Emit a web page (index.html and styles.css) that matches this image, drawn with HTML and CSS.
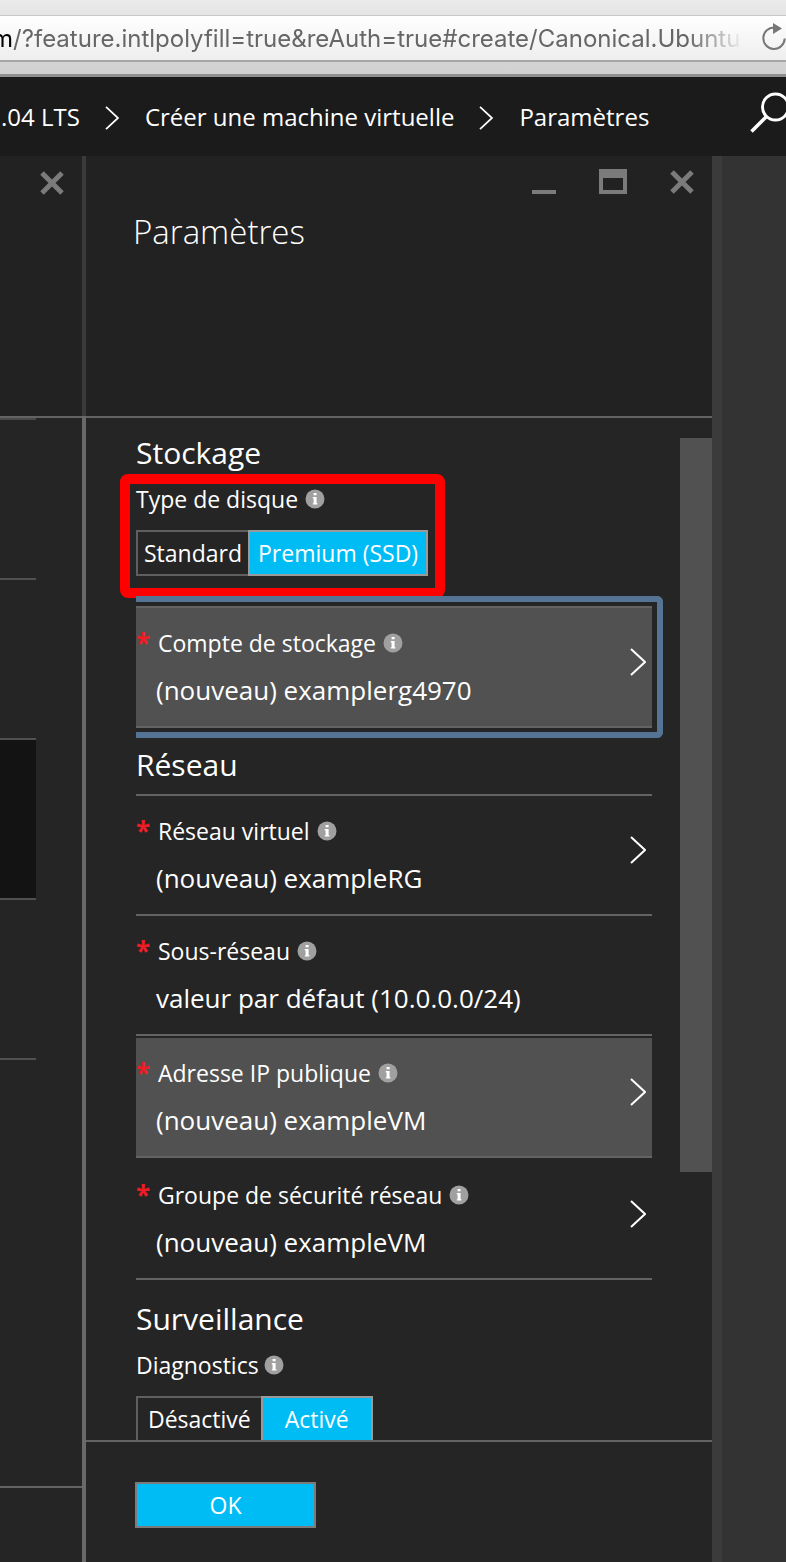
FILE: index.html
```html
<!DOCTYPE html>
<html lang="fr">
<head>
<meta charset="utf-8">
<title>Paramètres</title>
<link rel="stylesheet" href="styles.css">
</head>
<body>
<svg class="sprite" aria-hidden="true">
  <symbol id="info" viewBox="0 0 20 20"><circle cx="10" cy="10" r="9.5" fill="#a0a0a0"/><path d="M8.600 4h3v2.200h-3zM7.800 8h3.800v6.200h.8v1.400H7.800v-1.400h.8V9.400h-.8z" fill="#fff"/></symbol>
  <symbol id="chevron" viewBox="0 0 16 28"><path d="M1 1l14 13L1 27" fill="none" stroke="#fff" stroke-width="2"/></symbol>
  <symbol id="close" viewBox="0 0 24 24"><path d="M2 2l20 20M22 2L2 22" fill="none" stroke="#7b7b7b" stroke-width="5"/></symbol>
</svg>
<div class="page">
  <header class="browser">
    <div class="address">
      <div class="url">
        <span class="url-host">m</span>
        <input class="url-input" type="text" aria-label="Adresse" value="/?feature.intlpolyfill=true&amp;reAuth=true#create/Canonical.Ubuntu">
      </div>
      <button class="reload" type="button" aria-label="Actualiser">
        <svg width="26" height="28" viewBox="0 0 26 28"><path d="M12.5 4.5A10.7 10.700 0 1 0 22.700 15.500" fill="none" stroke="#777" stroke-width="2"/><path d="M11 0l9 5.500L11 11z" fill="#777"/></svg>
      </button>
    </div>
  </header>
  <nav class="crumbs">
    <a class="crumb" href="#">.04 LTS</a>
    <svg class="crumb-arrow" width="14" height="24"><use href="#chevron"/></svg>
    <a class="crumb" href="#">Créer une machine virtuelle</a>
    <svg class="crumb-arrow" width="14" height="24"><use href="#chevron"/></svg>
    <a class="crumb" href="#">Paramètres</a>
    <button class="search" type="button" aria-label="Rechercher">
      <svg width="40" height="42" viewBox="0 0 40 42"><circle cx="25.500" cy="15" r="13" fill="none" stroke="#fff" stroke-width="3"/><path d="M16 25L1.500 39.500" stroke="#fff" stroke-width="3.500"/></svg>
    </button>
  </nav>
  <main class="blades">
    <section class="blade previous">
      <div class="blade-head">
        <button class="tool" type="button" aria-label="Fermer"><svg width="24" height="24"><use href="#close"/></svg></button>
      </div>
      <div class="steps">
        <div class="step"></div>
        <div class="step"></div>
        <div class="step current"></div>
        <div class="step"></div>
      </div>
      <div class="blade-foot"></div>
    </section>
    <div class="divider"></div>
    <section class="blade settings">
      <div class="blade-head">
        <div class="tools">
          <button class="tool" type="button" aria-label="Réduire"><svg width="24" height="26"><path d="M0 21h24v4H0z" fill="#7b7b7b"/></svg></button>
          <button class="tool" type="button" aria-label="Agrandir"><svg width="28" height="26"><path d="M0 0h28v25H0zM4 9v12h20V9z" fill="#7b7b7b" fill-rule="evenodd"/></svg></button>
          <button class="tool" type="button" aria-label="Fermer"><svg width="24" height="24"><use href="#close"/></svg></button>
        </div>
        <h1 class="title">Paramètres</h1>
      </div>
      <div class="blade-body">
        <form class="form" id="settings">
          <h2 class="heading">Stockage</h2>
          <div class="field disk" role="radiogroup" aria-labelledby="disk-label">
            <div class="label" id="disk-label">Type de disque <svg class="info"><use href="#info"/></svg></div>
            <div class="toggle">
              <label class="option snug"><input type="radio" name="disk">Standard</label>
              <label class="option on"><input type="radio" name="disk" checked>Premium (SSD)</label>
            </div>
            <div class="highlight"></div>
          </div>
          <div class="focus">
            <button class="row card" type="button">
              <span class="row-text"><span class="label required">Compte de stockage <svg class="info"><use href="#info"/></svg></span><span class="value">(nouveau) examplerg4970</span></span>
              <svg class="row-arrow"><use href="#chevron"/></svg>
            </button>
          </div>
          <h2 class="heading network">Réseau</h2>
          <div class="rows">
            <button class="row" type="button">
              <span class="row-text"><span class="label required">Réseau virtuel <svg class="info"><use href="#info"/></svg></span><span class="value">(nouveau) exampleRG</span></span>
              <svg class="row-arrow"><use href="#chevron"/></svg>
            </button>
            <div class="row">
              <span class="row-text"><span class="label required">Sous-réseau <svg class="info"><use href="#info"/></svg></span><span class="value">valeur par défaut (10.0.0.0/24)</span></span>
            </div>
            <button class="row spaced filled" type="button">
              <span class="row-text"><span class="label required">Adresse IP publique <svg class="info"><use href="#info"/></svg></span><span class="value">(nouveau) exampleVM</span></span>
              <svg class="row-arrow"><use href="#chevron"/></svg>
            </button>
            <button class="row spaced" type="button">
              <span class="row-text"><span class="label required">Groupe de sécurité réseau <svg class="info"><use href="#info"/></svg></span><span class="value">(nouveau) exampleVM</span></span>
              <svg class="row-arrow"><use href="#chevron"/></svg>
            </button>
          </div>
          <h2 class="heading monitoring">Surveillance</h2>
          <div class="field" role="radiogroup" aria-labelledby="diag-label">
            <div class="label tight" id="diag-label">Diagnostics <svg class="info"><use href="#info"/></svg></div>
            <div class="toggle">
              <label class="option roomy"><input type="radio" name="diag">Désactivé</label>
              <label class="option on wide"><input type="radio" name="diag" checked>Activé</label>
            </div>
          </div>
        </form>
        <div class="scrollbar"></div>
      </div>
      <div class="blade-foot">
        <button class="ok" type="submit" form="settings">OK</button>
      </div>
    </section>
    <div class="edge"></div>
  </main>
</div>
</body>
</html>
```

FILE: styles.css
```css
* { box-sizing: border-box; }

body {
  margin: 0;
  background: #333;
  color: #fff;
  font-family: "Open Sans", "Noto Sans", sans-serif;
  font-size: 23px;
}

button {
  margin: 0;
  padding: 0;
  border: 0;
  background: none;
  color: inherit;
  font: inherit;
  text-align: left;
}

svg { display: block; flex: none; }
.sprite { position: absolute; width: 0; height: 0; }

.page {
  display: flex;
  flex-direction: column;
  height: 100vh;
  overflow: hidden;
}

.browser {
  flex: none;
  padding: 15px 0 12px;
  background: linear-gradient(#ebebeb, #e4e4e4 20%, #d0d0d0);
  border-bottom: 3px solid #8e908f;
}

.address {
  display: flex;
  align-items: center;
  height: 47px;
  border-top: 1px solid #c8c8c8;
  border-bottom: 2px solid #a6a6a6;
  background: linear-gradient(#fff, #eee);
  overflow: hidden;
}

.url {
  display: flex;
  flex: 1;
  min-width: 0;
  margin-left: -8px;
  padding-top: 2px;
  color: #666;
  font: 24px/32px Inter, sans-serif;
  -webkit-mask-image: linear-gradient(to left, transparent, #000 56px);
  mask-image: linear-gradient(to left, transparent, #000 56px);
}

.url-host { color: #000; }

.url-input {
  flex: 1;
  min-width: 0;
  padding: 0;
  border: 0;
  background: none;
  color: inherit;
  font: inherit;
}

.reload { flex: none; width: 24px; margin-left: 18px; padding-bottom: 2px; }

.crumbs {
  display: flex;
  flex: none;
  align-items: center;
  height: 79px;
  padding-left: 1px;
  background: #1b1b1b;
  font-size: 24px;
  overflow: hidden;
}

.crumb { color: inherit; text-decoration: none; white-space: nowrap; }
.crumb-arrow { margin: 3px 26px 0 25px; }
.search { width: 36px; margin-left: auto; padding-bottom: 8px; }

.blades { display: flex; flex: 1; min-height: 0; }

.blade {
  display: flex;
  flex-direction: column;
  background: #252525;
}

.blade-head {
  flex: none;
  height: 262px;
  padding-top: 13px;
  background: #222;
  border-bottom: 2px solid #636363;
}

.previous { flex: none; width: 82px; }
.previous .blade-head { padding: 14px 0 0 40px; }
.steps { flex: 1; width: 36px; border-top: 2px solid #4a4a4a; }
.step { height: 160px; border-bottom: 2px solid #505050; }
.current { background: #131313; }
.previous .blade-foot { height: 76px; }

.divider {
  flex: none;
  width: 4px;
  background: linear-gradient(#393a3a 260px, #696969 260px);
}

.settings { flex: 1; min-width: 0; }
.tools { display: flex; justify-content: flex-end; gap: 43px; padding-right: 18px; }

.title {
  margin: 13px 0 0 47px;
  font-size: 33px;
  font-weight: 300;
  line-height: 48px;
}

.blade-body { display: flex; flex: 1; min-height: 0; overflow: hidden; }
.form { flex: 1; min-width: 0; padding: 15px 28px 0 50px; }

.scrollbar {
  flex: none;
  width: 32px;
  height: 734px;
  margin-top: 20px;
  background: #515151;
}

.heading {
  margin: 0;
  font-size: 30px;
  font-weight: 400;
  line-height: 40px;
}

.network { margin: 7px 0 9px; }
.monitoring { margin-top: 19px; }

.field { position: relative; margin-top: 10px; }

.label {
  display: flex;
  align-items: center;
  gap: 7px;
  line-height: 32px;
}

.tight { gap: 5px; }
.info { width: 20px; height: 20px; }
.toggle { display: flex; margin-top: 15px; }

.option {
  position: relative;
  height: 46px;
  padding: 0 8px;
  border: 2px solid #5f5f5f;
  border-right: 0;
  line-height: 43px;
}

.option input {
  position: absolute;
  inset: 0;
  margin: 0;
  appearance: none;
}

.on { border: 2px solid #999; background: #00bcf5; }
.snug { padding: 0 6px 0 6px; }
.roomy { padding: 0 10px; }
.wide { padding: 0 22px; }

.highlight {
  position: absolute;
  top: -9px;
  left: -16px;
  width: 325px;
  height: 124px;
  border: 10px solid #f00;
  border-radius: 8px;
  pointer-events: none;
}

.focus {
  position: relative;
  margin: 20px -11px 0 0;
  padding: 4px 5px 4px 0;
  border: 6px solid #557394;
  border-left: 0;
  border-radius: 0 6px 6px 0;
  background: #252525;
}

.rows { border-top: 2px solid #636363; }

.row {
  display: flex;
  align-items: flex-start;
  width: 100%;
  padding: 19px 6px 16px 0;
  border-bottom: 2px solid #636363;
}

.card { border-top: 2px solid #636363; background: #515151; }
.filled { background: #515151; }
.spaced { margin-top: 2px; }
.row-text { flex: 1; min-width: 0; }
.row-arrow { width: 16px; height: 28px; margin-top: 21px; }

.required::before {
  content: "*";
  width: 15px;
  color: #ee1c25;
  font-size: 26px;
  font-weight: 700;
}

.value {
  display: block;
  margin-top: 11px;
  padding-left: 20px;
  font-size: 26px;
  line-height: 40px;
}

.blade-foot { flex: none; height: 122px; border-top: 2px solid #636363; }
.settings .blade-foot { padding: 40px 0 0 49px; }

.ok {
  width: 181px;
  height: 46px;
  border: 2px solid #7b7b7b;
  background: #00bcf5;
  text-align: center;
}

.edge { flex: none; width: 74px; border-left: 10px solid #3b3b3c; background: #333; }
```
